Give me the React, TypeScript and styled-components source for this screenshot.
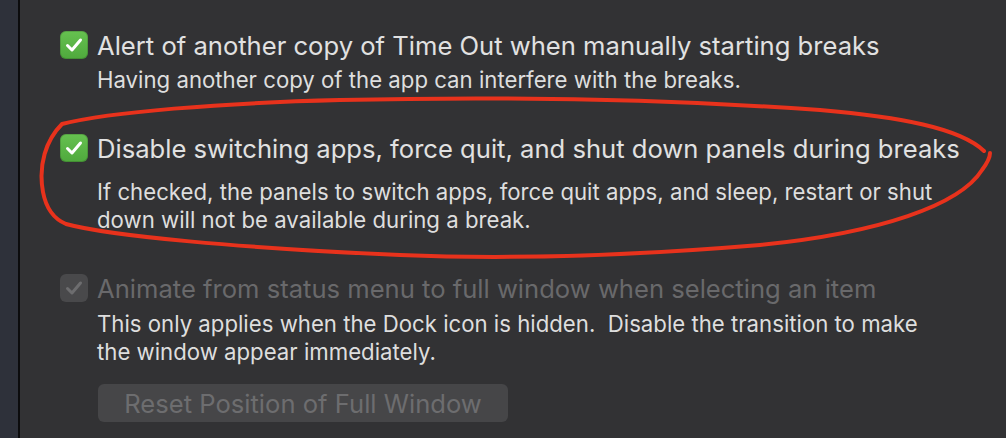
import styled, { createGlobalStyle } from 'styled-components'

const GlobalStyle = createGlobalStyle`
    html, body {
        margin: 0;
        padding: 0;
        background: #323234;
    }
    body {
        font-family: Inter, "Noto Sans", "Liberation Sans", sans-serif;
        -webkit-font-smoothing: antialiased;
    }
`

interface IOption {
    title: string;
    lines: string[];
    enabled: boolean;
    descGap: number;
    spaceAfter: number;
}

const options: IOption[] = [
    {
        title: 'Alert of another copy of Time Out when manually starting breaks',
        lines: ['Having another copy of the app can interfere with the breaks.'],
        enabled: true,
        descGap: 4,
        spaceAfter: 39,
    },
    {
        title: 'Disable switching apps, force quit, and shut down panels during breaks',
        lines: [
            'If checked, the panels to switch apps, force quit apps, and sleep, restart or shut',
            'down will not be available during a break.',
        ],
        enabled: true,
        descGap: 13,
        spaceAfter: 39,
    },
    {
        title: 'Animate from status menu to full window when selecting an item',
        lines: [
            'This only applies when the Dock icon is hidden.  Disable the transition to make',
            'the window appear immediately.',
        ],
        enabled: false,
        descGap: 5,
        spaceAfter: 18,
    },
]

function CheckBox({ enabled }: { enabled: boolean }) {
    return (
        <Box $enabled={enabled}>
            <svg width="28" height="28" viewBox="0 0 28 28">
                <path
                    d="M7.5 14.5 L12 19 L20.5 9"
                    fill="none"
                    stroke={enabled ? '#ffffff' : '#6d6d6f'}
                    strokeWidth="3"
                    strokeLinecap="round"
                    strokeLinejoin="round"
                />
            </svg>
        </Box>
    )
}

function App() {
    return (
        <Page>
            <GlobalStyle />
            <Sidebar />
            <Divider />
            <Panel>
                {
                    options.map(opt => (
                        <Option key={opt.title} $spaceAfter={opt.spaceAfter}>
                            <CheckBox enabled={opt.enabled} />
                            <Title $enabled={opt.enabled}>{opt.title}</Title>
                            <Description $gap={opt.descGap}>
                                {opt.lines.map(l => <Line key={l}>{l}</Line>)}
                            </Description>
                        </Option>
                    ))
                }
                <ResetButton disabled>Reset Position of Full Window</ResetButton>
            </Panel>
            <Annotation width="1006" height="438" viewBox="0 0 1006 438">
                <path
                    d="M984 151 C960 128 900 117 820 110 C680 100 520 96 340 100 C220 103 110 112 62 124 C46 140 38 165 43 192 C46 208 54 219 66 224 C110 236 240 248 400 255 C520 260 640 255 760 245 C880 233 960 205 982 170 C988 162 990 158 990 153"
                    fill="none"
                    stroke="#e8321c"
                    strokeWidth="4"
                    strokeLinecap="round"
                />
            </Annotation>
        </Page>
    )
}

const Page = styled.div`
    position: relative;
    display: flex;
    width: 1006px;
    height: 438px;
    overflow: hidden;
    background: #323234;
`

const Sidebar = styled.div`
    width: 18px;
    flex-shrink: 0;
    background: #2e313a;
`

const Divider = styled.div`
    width: 2px;
    flex-shrink: 0;
    background: #0c0c0d;
`

const Panel = styled.div`
    flex: 1;
    display: flex;
    flex-direction: column;
    padding: 30px 0 0 40px;
`

const Option = styled.div<{ $spaceAfter: number }>`
    display: grid;
    grid-template-columns: 28px 1fr;
    column-gap: 9px;
    align-items: center;
    margin-bottom: ${props => props.$spaceAfter}px;
`

interface IBoxProps {
    $enabled: boolean;
}

const Box = styled.div<IBoxProps>`
    width: 28px;
    height: 28px;
    margin-top: -2px;
    border-radius: 6px;
    display: flex;
    align-items: center;
    justify-content: center;
    background: ${props => props.$enabled
        ? 'linear-gradient(180deg, #66c150 0%, #4fa93d 100%)'
        : '#49494b'};
    box-shadow: ${props => props.$enabled
        ? 'inset 0 0 0 1px rgba(0,0,0,0.15)'
        : 'none'};
`

const Title = styled.div<IBoxProps>`
    font-size: 25.6px;
    line-height: 32px;
    color: ${props => props.$enabled ? '#e1e1e1' : '#69696b'};
    white-space: nowrap;
`

const Description = styled.div<{ $gap: number }>`
    grid-column: 2;
    margin-top: ${props => props.$gap}px;
    font-size: 22.2px;
    line-height: 28px;
    color: #dedede;
`

const Line = styled.div`
    white-space: pre;
`

const ResetButton = styled.button`
    align-self: flex-start;
    margin-left: 38px;
    width: 410px;
    height: 38px;
    border: none;
    border-radius: 6px;
    background: #464648;
    color: #6d6d6f;
    font-family: inherit;
    font-size: 25.6px;
    padding: 0;
`

const Annotation = styled.svg`
    position: absolute;
    left: 0;
    top: 0;
    pointer-events: none;
`

export default App;
